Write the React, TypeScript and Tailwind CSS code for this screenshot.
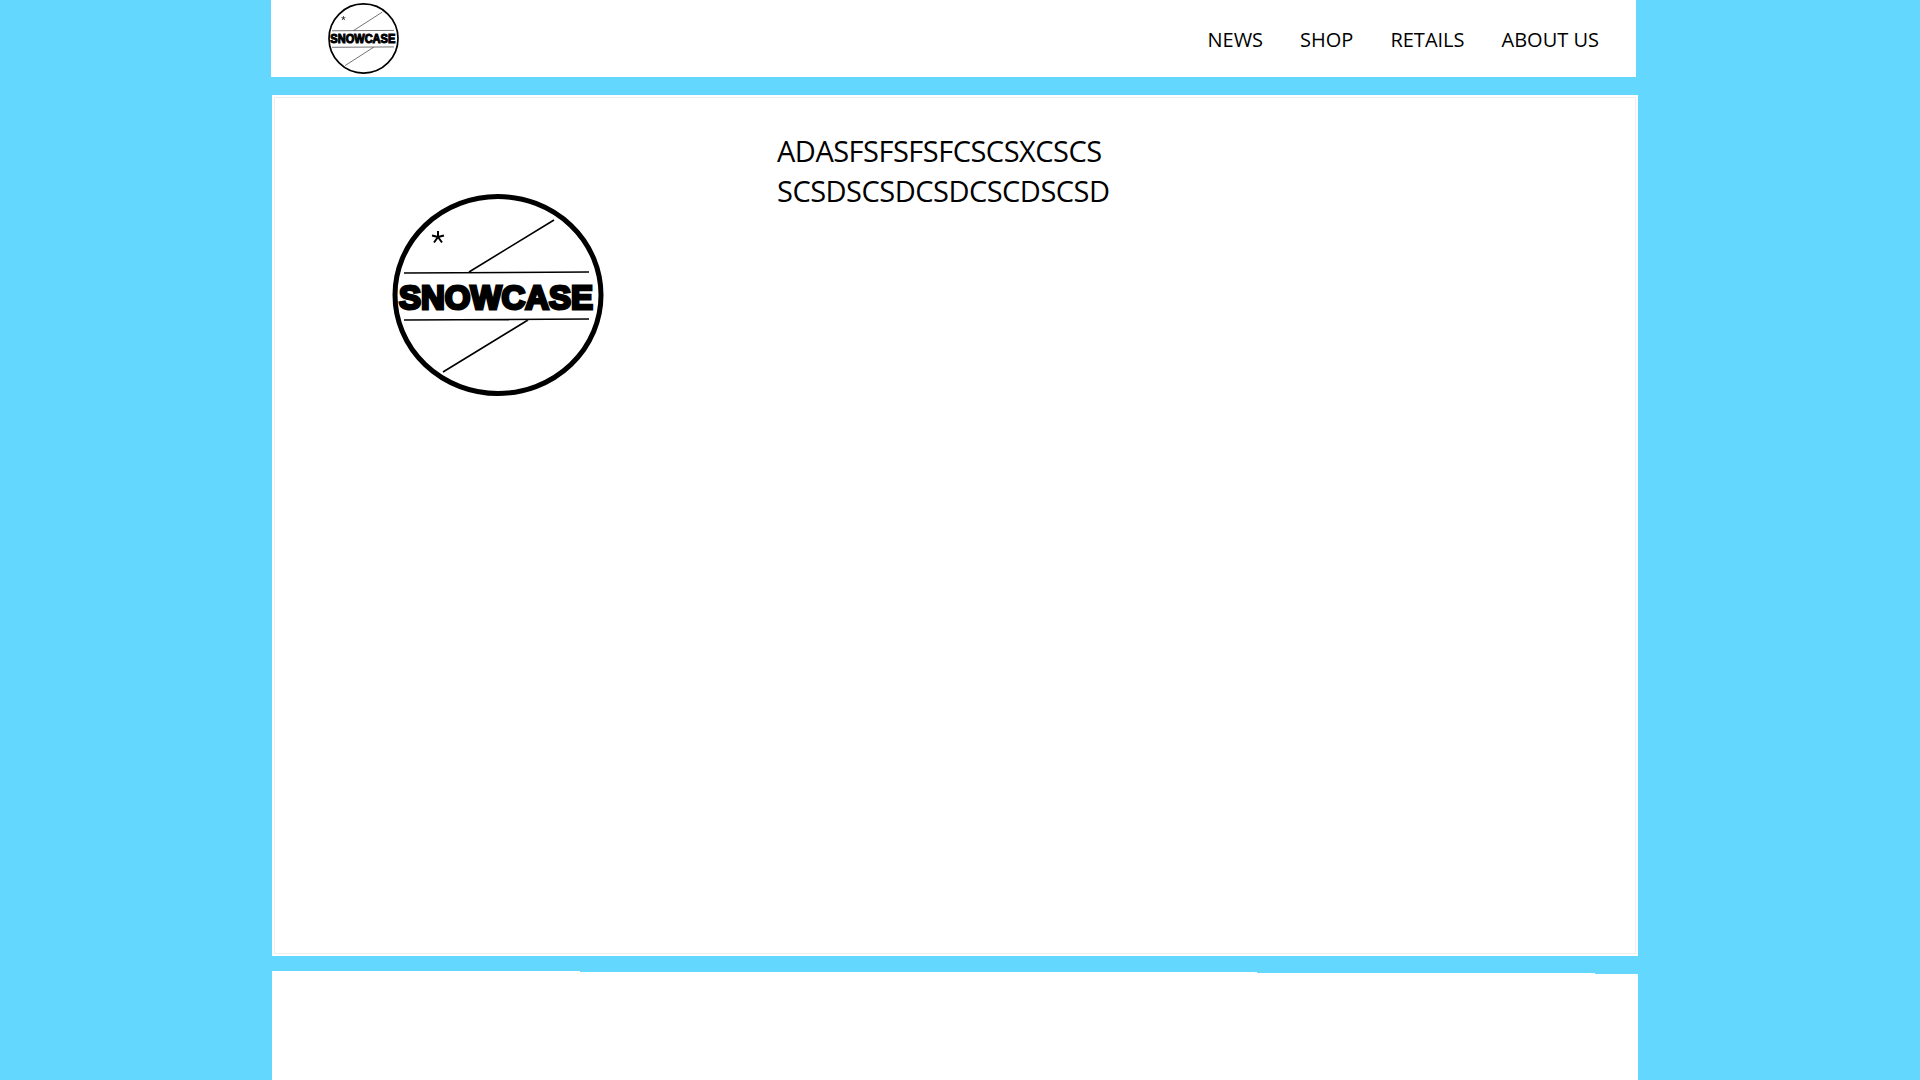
const Logo = ({ className }: { className: string }) => {
  return (
    <svg viewBox="0 0 212 202" preserveAspectRatio="none" className={className}>
      <ellipse cx="106" cy="101" rx="103" ry="98.5" fill="#fff" stroke="#000" strokeWidth="5" />
      <path d="M12 79 L197 78 M12 126 L197 125 M77 78 L162 26 M136 126 L51 178" stroke="#000" strokeWidth="1.6" fill="none" />
      {/* little star top left */}
      <path d="M46 37 V43 M46 43 L52 41.5 M46 43 L50 48.5 M46 43 L42 48.5 M46 43 L40 41.5" stroke="#000" strokeWidth="2" fill="none" />
      <text
        x="7"
        y="115"
        textLength="194"
        lengthAdjust="spacingAndGlyphs"
        fontFamily="'Liberation Sans', sans-serif"
        fontWeight="700"
        fontSize="34"
        stroke="#000"
        strokeWidth="3"
      >
        SNOWCASE
      </text>
    </svg>
  )
}

const navItems = ['NEWS', 'SHOP', 'RETAILS', 'ABOUT US']

const App = () => {
  return (
    <div className="h-[1080px] overflow-hidden bg-[#63d7fe] font-['Open_Sans',sans-serif] text-black">
      <header className="ml-[271px] w-[1365px] h-[77px] bg-white flex items-center justify-between pl-[57px] pr-[37px]">
        <Logo className="w-[71px] h-[71px]" />
        <nav className="flex gap-[37px] text-[20px] pt-[2px]">
          {navItems.map((item) => (
            <a key={item}>{item}</a>
          ))}
        </nav>
      </header>

      <main className="ml-[272px] mt-[18px] w-[1366px] h-[861px] bg-white p-[2px]">
        <div className="h-full border border-[#eeeeee] flex items-start">
          <Logo className="ml-[117px] mt-[96px] w-[212px] h-[202px] shrink-0" />
          <div className="ml-[173px] mt-[33px] text-[29px] leading-[40px] tracking-[-0.5px]">
            <p>ADASFSFSFSFCSCSXCSCS</p>
            <p>SCSDSCSDCSDCSCDSCSD</p>
          </div>
        </div>
      </main>

      {/* top edge of the footer is a bit uneven */}
      <footer className="ml-[272px] mt-[15px] w-[1366px]">
        <div className="h-[3px] flex items-end">
          <div className="w-[308px] h-[3px] bg-white" />
          <div className="w-[677px] h-[2px] bg-white" />
          <div className="w-[338px] h-[1px] bg-white" />
        </div>
        <div className="h-[120px] bg-white" />
      </footer>
    </div>
  )
}

export default App
